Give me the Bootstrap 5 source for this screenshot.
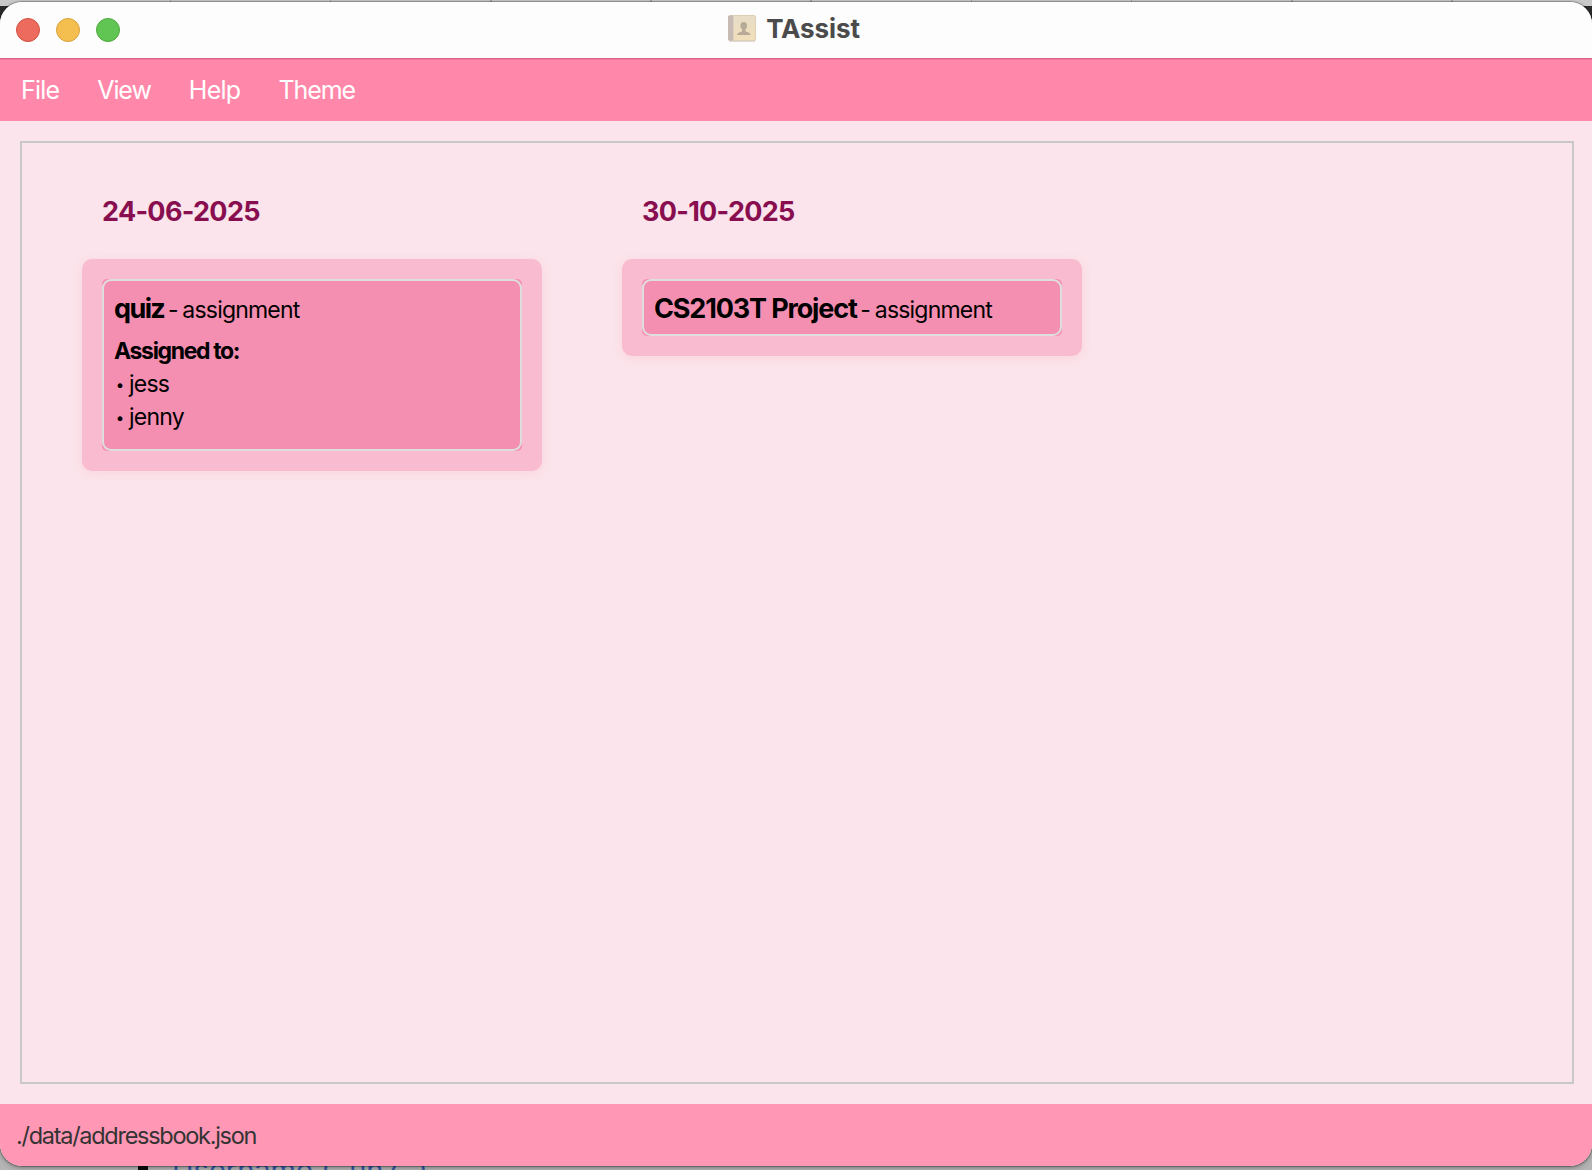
<!DOCTYPE html>
<html lang="en">
<head>
<meta charset="utf-8">
<meta name="viewport" content="width=device-width, initial-scale=1">
<title>TAssist</title>
<link href="https://cdn.jsdelivr.net/npm/bootstrap@5.3.0/dist/css/bootstrap.min.css" rel="stylesheet">
<style>
body{font-family:Inter,"Liberation Sans",sans-serif;color:#000}
.desktop{height:1170px;width:1592px;padding-top:2px;background:linear-gradient(#c9c9c9 0 6px,#2c2c2c 6px 30px,#b4b4b4 60px)}
.tab-strip{inset:0 0 auto 0;height:3px;background:repeating-linear-gradient(90deg,transparent 0 158.700px,#a3a3a3 158.700px 160.200px) 11px 0}
.page-below{left:138px;top:1150px;height:20px;color:#3658a8;font-size:29px;line-height:40px;letter-spacing:0;white-space:pre}
.page-mark{width:10px;height:20px;background:#0b0b0b;margin-right:24px}
.app-window{height:1164px;border-radius:22px;background:#fbe4eb;box-shadow:0 0 1px 1px rgba(0,0,0,.28),0 2px 5px rgba(0,0,0,.3)}
.title-bar{height:56px;background:#fdfdfd;padding:0 16px}
.light{width:24px;height:24px;border-radius:50%;border:1px solid}
.light-close{background:#ec6a5e;border-color:#d0513f}
.light-min{background:#f4bf4f;border-color:#d6a03c}
.light-zoom{background:#61c554;border-color:#4ca93a}
.app-title{gap:10px;margin:0 4px 2px 0}
.app-name{font-size:26px;font-weight:700;color:#4b4b4b;line-height:30px;letter-spacing:-.1px}
.menu-bar{height:63px;background:#ff88aa;border-top:1px solid #d9608a;box-shadow:inset 0 1px #f27a9e;padding-left:21px;gap:38px;font-size:25px;line-height:30px}
.menu-bar a{color:#fff;text-decoration:none}
.ls-file{letter-spacing:-.8px}.ls-view{letter-spacing:-1.1px}.ls-help{letter-spacing:-.7px}.ls-theme{letter-spacing:-1.1px}
.task-pane{margin:20px 18px 20px 20px;border:2px solid #c8c8c8;padding:52px 60px 0;gap:80px}
.day{width:460px}
.day-title{font-size:27px;font-weight:700;color:#880e4f;line-height:34px;letter-spacing:-.7px;margin:0 0 30px 20px}
.day-box{background:#f9bbd0;border-radius:10px;padding:20px;box-shadow:0 2px 10px rgba(255,182,193,.35)}
.task{background:#f58fb1;border-radius:5px}
.task-frame{border:2px solid #dedede;border-radius:9px;padding:7px 10px 5px}
.task-head{font-size:27px;line-height:41px;height:41px}
.task-name{font-weight:700;letter-spacing:-1.15px}
.task-short{letter-spacing:-1.6px}
.task-kind{font-size:23px;letter-spacing:-.8px;word-spacing:-1px;margin-left:-1px}
.assignees{font-size:23px;line-height:33px;letter-spacing:-.75px;margin:6px 0 10px}
.assignees-title{font-weight:700;letter-spacing:-1.35px}
.dot{width:11px;margin-right:4px;font-size:15px;text-align:center}
.status-bar{height:62px;background:#ff97b5;color:#333;font-size:23.5px;letter-spacing:-1.28px;padding:2px 0 0 16px}
</style>
<script src="https://cdn.jsdelivr.net/npm/bootstrap@5.3.0/dist/js/bootstrap.bundle.min.js"></script>
</head>
<body>
<div class="desktop position-relative overflow-hidden">
  <div class="tab-strip position-absolute"></div>
  <div class="page-below position-absolute d-flex overflow-hidden"><span class="page-mark"></span><span>Username ( `un7` )</span></div>
  <div class="app-window position-relative d-flex flex-column overflow-hidden">
    <header class="title-bar d-flex align-items-center">
      <div class="d-flex gap-3 w-25 flex-grow-1">
        <span class="light light-close"></span><span class="light light-min"></span><span class="light light-zoom"></span>
      </div>
      <div class="app-title d-flex align-items-center">
        <svg width="28" height="28" viewBox="0 0 28 28" aria-hidden="true">
          <defs><linearGradient id="cover" x1="0" y1="0" x2="0" y2="1"><stop offset="0" stop-color="#e8ddc8"/><stop offset="1" stop-color="#f2dfb9"/></linearGradient></defs>
          <rect x="1" y="2" width="26.5" height="25" rx="1.5" fill="#dedbd6"/>
          <rect x="0.5" y="0.500" width="27" height="25" rx="1.5" fill="url(#cover)" stroke="#dccfb4" stroke-width="1"/>
          <path d="M1.500 0.500H5v25H1.500Q0 25.500 0 24V2Q0 .5 1.500 .5z" fill="#c8bbb5"/>
          <path d="M5.500 0.500v25" stroke="#ddd0c0" stroke-width="1"/>
          <path d="M15.700 7c-2.300 0-3.400 1.600-3.300 3.700.1 1.700.7 3 1.700 3.800V16c-.8 1.300-4.900 1.200-5.100 4h13.600c-.2-2.800-4.400-2.700-5.200-4v-1.500c1-.8 1.600-2.100 1.700-3.800.1-2.100-1.100-3.700-3.400-3.700z" fill="#b8aa98"/>
        </svg>
        <span class="app-name">TAssist</span>
      </div>
      <div class="w-25 flex-grow-1"></div>
    </header>
    <nav class="menu-bar d-flex align-items-center">
      <a class="ls-file" href="#">File</a><a class="ls-view" href="#">View</a><a class="ls-help" href="#">Help</a><a class="ls-theme" href="#">Theme</a>
    </nav>
    <main class="task-pane flex-grow-1 d-flex align-items-start">
      <section class="day">
        <h2 class="day-title">24-06-2025</h2>
        <div class="day-box"><div class="task"><div class="task-frame">
          <div class="task-head"><span class="task-name task-short">quiz</span><span class="task-kind"> - assignment</span></div>
          <div class="assignees">
            <div class="assignees-title">Assigned to:</div>
            <div class="d-flex"><span class="dot">•</span>jess</div>
            <div class="d-flex"><span class="dot">•</span>jenny</div>
          </div>
        </div></div></div>
      </section>
      <section class="day">
        <h2 class="day-title">30-10-2025</h2>
        <div class="day-box"><div class="task"><div class="task-frame">
          <div class="task-head"><span class="task-name">CS2103T Project</span><span class="task-kind"> - assignment</span></div>
        </div></div></div>
      </section>
    </main>
    <footer class="status-bar d-flex align-items-center">./data/addressbook.json</footer>
  </div>
</div>
</body>
</html>
